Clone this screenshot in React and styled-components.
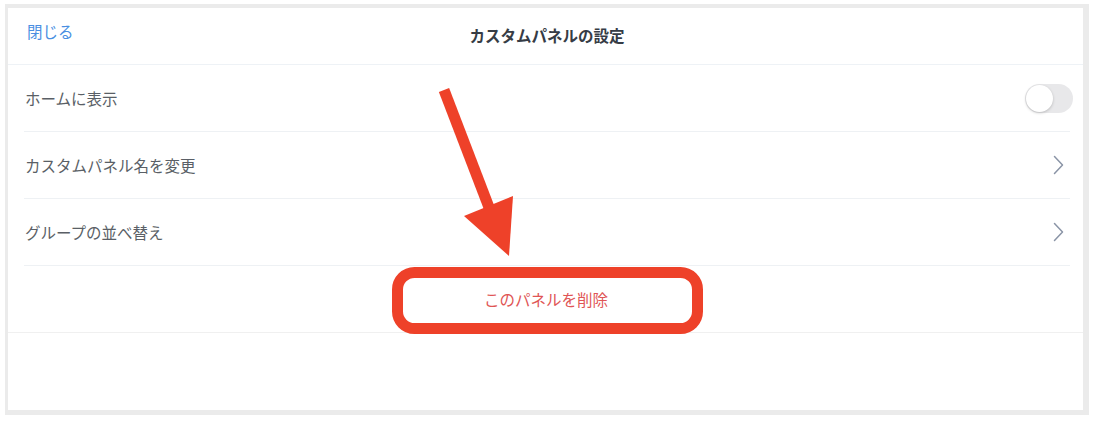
import React from 'react'
import styled, {createGlobalStyle} from 'styled-components'

const rows = [
  {id: 'home', label: 'ホームに表示', kind: 'toggle'},
  {id: 'rename', label: 'カスタムパネル名を変更', kind: 'link'},
  {id: 'order', label: 'グループの並べ替え', kind: 'link'},
]

function Chevron() {
  return (
    <svg width="11" height="20" viewBox="0 0 11 20">
      <polyline
        points="1.5,1.5 9.5,10 1.5,18.5"
        fill="none"
        stroke="#8a94a6"
        strokeWidth="1.5"
        strokeLinecap="round"
        strokeLinejoin="round"
      />
    </svg>
  )
}

function Annotation() {
  return (
    <Overlay viewBox="0 0 1094 424" width="1094" height="424">
      <line x1="444" y1="90" x2="490" y2="210" stroke="#ee4129" strokeWidth="11" />
      <polygon points="464,216 513,196 509,256" fill="#ee4129" />
      <rect
        x="397.5"
        y="272.5"
        width="300"
        height="56"
        rx="17"
        fill="none"
        stroke="#ee4129"
        strokeWidth="11"
      />
    </Overlay>
  )
}

export default function App() {
  return (
    <Page>
      <GlobalStyle />
      <Frame>
        <Header>
          <CloseLink>閉じる</CloseLink>
          <Title>カスタムパネルの設定</Title>
        </Header>
        <List>
          {rows.map(({id, label, kind}) => (
            <Row key={id}>
              <Label>{label}</Label>
              {kind === 'toggle' ? (
                <Toggle>
                  <Knob />
                </Toggle>
              ) : (
                <ChevronWrap>
                  <Chevron />
                </ChevronWrap>
              )}
            </Row>
          ))}
        </List>
        <DeleteRow>
          <DeleteText>このパネルを削除</DeleteText>
        </DeleteRow>
      </Frame>
      <Annotation />
    </Page>
  )
}

const GlobalStyle = createGlobalStyle`
  body {
    margin: 0;
    background: #fff;
    font-family: "Noto Sans CJK JP", "Noto Sans", sans-serif;
  }
`

const Page = styled.div`
  position: relative;
  width: 1094px;
  height: 424px;
  padding: 4px 0 0 5px;
  box-sizing: border-box;
`

const Frame = styled.div`
  width: 1084px;
  height: 411px;
  box-sizing: border-box;
  border-style: solid;
  border-color: #ebebeb;
  border-width: 4px 6px 5px 3px;
  background: #fff;
`

const Header = styled.div`
  position: relative;
  display: flex;
  align-items: center;
  justify-content: center;
  height: 56px;
  border-bottom: 1px solid #eef2f6;
`

const CloseLink = styled.span`
  position: absolute;
  left: 19px;
  top: 12px;
  font-size: 15.5px;
  color: #4a8fe2;
`

const Title = styled.div`
  font-size: 15.5px;
  font-weight: 700;
  color: #363c45;
  margin-left: 3px;
  margin-top: -2px;
`

const List = styled.div`
  padding: 0 13px 0 16px;
`

const Row = styled.div`
  display: flex;
  align-items: center;
  justify-content: space-between;
  height: 66px;
  border-bottom: 1px solid #eef1f4;
  padding-left: 1px;
`

const Label = styled.span`
  font-size: 15.5px;
  color: #5a5f66;
`

const Toggle = styled.div`
  position: relative;
  width: 48px;
  height: 29px;
  margin-right: -3px;
  border-radius: 15px;
  background: #e8e8ea;
`

const Knob = styled.div`
  position: absolute;
  left: 1px;
  top: 1px;
  width: 27px;
  height: 27px;
  border-radius: 50%;
  background: #fff;
  box-shadow: 0 1px 3px rgba(0, 0, 0, 0.2);
`

const ChevronWrap = styled.div`
  display: flex;
  margin-right: 6px;
`

const DeleteRow = styled.div`
  display: flex;
  align-items: center;
  justify-content: center;
  height: 66px;
  border-bottom: 1px solid #f0f0f0;
`

const DeleteText = styled.span`
  font-size: 15.5px;
  color: #e05555;
  margin-left: 1px;
`

const Overlay = styled.svg`
  position: absolute;
  left: 0;
  top: 0;
  pointer-events: none;
`
